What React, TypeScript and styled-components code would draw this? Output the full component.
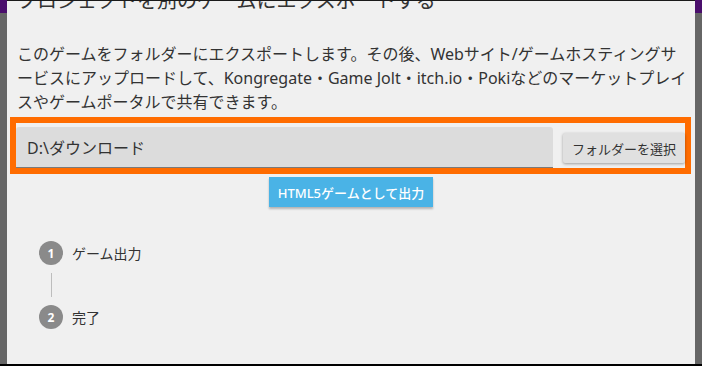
import React from "react";
import styled, { createGlobalStyle } from "styled-components";

const GlobalStyle = createGlobalStyle`
  html, body {
    margin: 0;
    padding: 0;
    background: #666666;
    overflow: hidden;
  }
  body {
    font-family: "Noto Sans", "Noto Sans CJK JP", sans-serif;
    color: #333;
  }
`;

const Page = styled.div`
  display: flex;
  width: 702px;
  height: 364px;
  border-bottom: 2px solid #000;
  overflow: hidden;
`;

const Backdrop = styled.div`
  width: 7px;
  flex: none;
  background: #666666;
  display: flex;
  flex-direction: column;
`;

const BackdropHeader = styled.div`
  height: 13px;
  background: #4a0e6c;
`;

const Dialog = styled.div`
  flex: 1;
  background: #f0f0f0;
  border-top: 1px solid #1a1a1a;
  display: flex;
  flex-direction: column;
  overflow: hidden;
`;

const Title = styled.h2`
  margin: -15px 0 0 0;
  padding: 0 0 0 10px;
  font-family: "Noto Sans CJK JP", sans-serif;
  font-weight: 400;
  font-size: 20px;
  line-height: 28px;
  color: #333;
  white-space: nowrap;
`;

const Body = styled.p`
  margin: 28px 0 0 0;
  padding: 0 2px 0 10px;
  font-family: "Noto Sans", "Noto Sans CJK JP", sans-serif;
  font-size: 16px;
  line-height: 24px;
  color: #333;
`;

const Highlight = styled.div`
  margin: 3px 4px 0 3px;
  border: 6px solid #ff6c00;
  display: flex;
  align-items: flex-end;
  gap: 10px;
  height: 45px;
`;

const PathField = styled.div`
  flex: 1;
  height: 40px;
  background: #dcdcdc;
  border-radius: 3px 3px 0 0;
  border-bottom: 1.5px solid #7a7a7a;
  display: flex;
  align-items: center;
  padding: 0 11px;
  font-family: "Noto Sans", "Noto Sans CJK JP", sans-serif;
  font-size: 16px;
  color: #333;
`;

const FolderButton = styled.button`
  flex: none;
  width: 122px;
  height: 30px;
  margin-bottom: 5px;
  border: none;
  border-radius: 2px;
  background: #e0e0e0;
  box-shadow: 0 1px 3px rgba(0, 0, 0, 0.35);
  font-family: "Noto Sans CJK JP", sans-serif;
  font-size: 13px;
  color: #333;
  padding: 0;
`;

const ExportRow = styled.div`
  display: flex;
  justify-content: center;
  margin-top: 3px;
`;

const ExportButton = styled.button`
  width: 164px;
  height: 30px;
  border: none;
  border-radius: 0;
  background: #4ab3e6;
  color: #fff;
  font-family: "Noto Sans", "Noto Sans CJK JP", sans-serif;
  font-weight: 500;
  font-size: 13px;
  box-shadow: 0 2px 2px rgba(0, 0, 0, 0.25);
  padding: 0;
`;

const Stepper = styled.div`
  display: flex;
  flex-direction: column;
  margin: 34px 0 0 32px;
`;

const Step = styled.div`
  display: flex;
  align-items: center;
  gap: 9px;
  height: 24px;
`;

const StepCircle = styled.div`
  width: 24px;
  height: 24px;
  border-radius: 50%;
  background: #8a8a8a;
  color: #fff;
  font-family: "Noto Sans", sans-serif;
  font-weight: 700;
  font-size: 12px;
  display: flex;
  align-items: center;
  justify-content: center;
`;

const StepLabel = styled.span`
  font-family: "Noto Sans CJK JP", sans-serif;
  font-size: 14px;
  color: #333;
`;

const Connector = styled.div`
  width: 1px;
  height: 24px;
  margin: 8px 0 8px 11.5px;
  background: #bdbdbd;
`;

export default function App() {
  return (
    <>
      <GlobalStyle />
      <Page>
        <Backdrop>
          <BackdropHeader />
        </Backdrop>
        <Dialog>
          <Title>プロジェクトを別のゲームにエクスポートする</Title>
          <Body>
            このゲームをフォルダーにエクスポートします。その後、Webサイト/ゲームホスティングサ
            <br />
            ービスにアップロードして、Kongregate・Game Jolt・itch.io・Pokiなどのマーケットプレイ
            <br />
            スやゲームポータルで共有できます。
          </Body>
          <Highlight>
            <PathField>D:\ダウンロード</PathField>
            <FolderButton>フォルダーを選択</FolderButton>
          </Highlight>
          <ExportRow>
            <ExportButton>HTML5ゲームとして出力</ExportButton>
          </ExportRow>
          <Stepper>
            <Step>
              <StepCircle>1</StepCircle>
              <StepLabel>ゲーム出力</StepLabel>
            </Step>
            <Connector />
            <Step>
              <StepCircle>2</StepCircle>
              <StepLabel>完了</StepLabel>
            </Step>
          </Stepper>
        </Dialog>
        <Backdrop>
          <BackdropHeader />
        </Backdrop>
      </Page>
    </>
  );
}
